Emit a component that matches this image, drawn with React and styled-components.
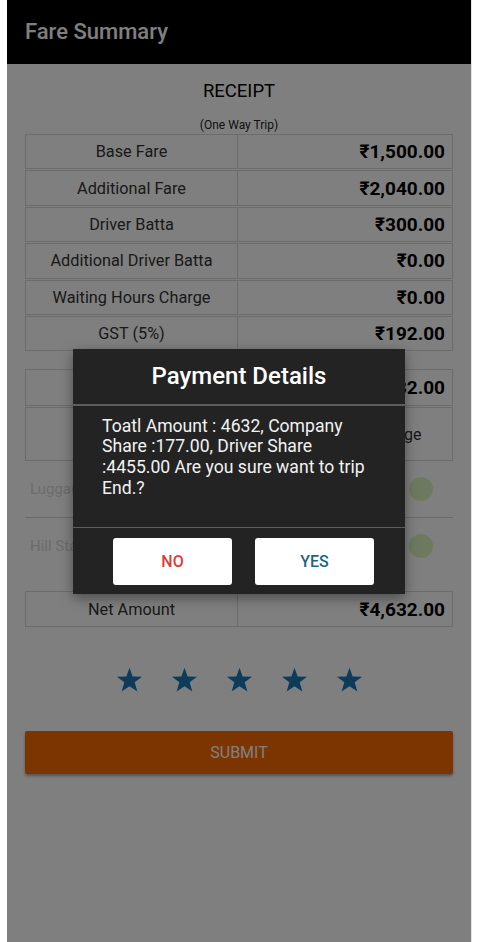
import React from "react";
import styled, { createGlobalStyle } from "styled-components";

const GlobalStyle = createGlobalStyle`
  body {
    margin: 0;
    background: #fff;
    font-family: Roboto, "Noto Sans", "Liberation Sans", sans-serif;
  }
`;

const Frame = styled.div`
  position: relative;
  margin-left: 7px;
  width: 464px;
  height: 942px;
  overflow: hidden;
  background: #fff;
  box-shadow: 1px 0 0 #e4e4e4;
`;

const Header = styled.header`
  height: 64px;
  background: #000;
  color: #fff;
  display: flex;
  align-items: center;
  padding-left: 18px;
  padding-bottom: 2px;
  box-sizing: border-box;
  font-size: 22px;
  font-weight: 500;
`;

const Content = styled.main`
  padding: 0 18px;
`;

const Title = styled.h2`
  margin: 0;
  padding-top: 16px;
  text-align: center;
  font-size: 18.5px;
  line-height: 22px;
  font-weight: 400;
  color: #000;
`;

const SubTitle = styled.div`
  margin-top: 16px;
  text-align: center;
  font-size: 12px;
  line-height: 14px;
  color: #222;
`;

const Table = styled.div`
  display: flex;
  flex-direction: column;
  gap: 1px;
  margin-top: ${(p) => p.$top || 0}px;
`;

const Row = styled.div`
  display: grid;
  grid-template-columns: 212px 1fr;
  height: ${(p) => p.$h || 35.4}px;
  border: 1px solid #d9d9d9;
  box-sizing: border-box;
`;

const Label = styled.div`
  display: flex;
  align-items: center;
  justify-content: center;
  text-align: center;
  border-right: 1px solid #d9d9d9;
  font-size: 16.3px;
  line-height: 19px;
  color: #333;
`;

const Value = styled.div`
  display: flex;
  align-items: center;
  justify-content: ${(p) => (p.$plain ? "center" : "flex-end")};
  padding: ${(p) => (p.$plain ? "0 0 0 30px" : "0 7px 0 0")};
  font-size: ${(p) => (p.$plain ? 16 : 19)}px;
  font-weight: ${(p) => (p.$plain ? 400 : 700)};
  color: ${(p) => (p.$plain ? "#333" : "#000")};
`;

const SwitchRow = styled.div`
  display: flex;
  align-items: center;
  justify-content: space-between;
  height: 56px;
  padding: 0 20px 0 5px;
  border-bottom: ${(p) => (p.$divided ? "1px solid #d6d6d6" : "none")};
  font-size: 15px;
  color: #d8d8d8;
`;

const Thumb = styled.span`
  width: 24px;
  height: 24px;
  border-radius: 50%;
  background: #dcf5c0;
`;

const Stars = styled.div`
  display: flex;
  justify-content: center;
  gap: 28px;
  margin-top: 40px;
  padding-left: 1px;
`;

const Submit = styled.button`
  display: block;
  width: 100%;
  height: 43px;
  margin-top: 38px;
  border: none;
  border-radius: 2px;
  background: #fb6a00;
  color: #fff;
  font-family: inherit;
  font-size: 16px;
  box-shadow: 0 2px 3px rgba(0, 0, 0, 0.35);
`;

const Overlay = styled.div`
  position: absolute;
  inset: 0;
  background: rgba(0, 0, 0, 0.5);
  display: flex;
  align-items: center;
  justify-content: center;
`;

const Dialog = styled.div`
  width: 332px;
  background: #232323;
  box-shadow: 0 4px 12px rgba(0, 0, 0, 0.4);
  margin-top: 1px;
`;

const DialogTitle = styled.div`
  height: 55px;
  display: flex;
  align-items: center;
  justify-content: center;
  border-bottom: 2px solid #5c5c5c;
  color: #fff;
  font-size: 24px;
  font-weight: 500;
`;

const Message = styled.p`
  margin: 0;
  padding: 10px 30px 29px 29px;
  color: #f2f2f2;
  font-size: 17.6px;
  line-height: 20.7px;
`;

const Actions = styled.div`
  display: flex;
  justify-content: center;
  gap: 23px;
  padding: 10px 0 9px 9px;
  border-top: 1px solid #5c5c5c;
`;

const DialogButton = styled.button`
  width: 119px;
  height: 47px;
  border: none;
  border-radius: 3px;
  background: #fff;
  color: ${(p) => p.$color};
  font-family: inherit;
  font-size: 16px;
  font-weight: 500;
`;

const Star = () => (
  <svg width="27" height="26" viewBox="0 0 24 23">
    <polygon
      fill="#1a78b4"
      points="12,0.5 14.8,8.3 23.2,8.5 16.6,13.6 19,21.8 12,17 5,21.8 7.4,13.6 0.8,8.5 9.2,8.3"
    />
  </svg>
);

const fares = [
  ["Base Fare", "₹1,500.00"],
  ["Additional Fare", "₹2,040.00"],
  ["Driver Batta", "₹300.00"],
  ["Additional Driver Batta", "₹0.00"],
  ["Waiting Hours Charge", "₹0.00"],
  ["GST (5%)", "₹192.00"],
];

export default function App() {
  return (
    <>
      <GlobalStyle />
      <Frame>
        <Header>Fare Summary</Header>
        <Content>
          <Title>RECEIPT</Title>
          <SubTitle>(One Way Trip)</SubTitle>
          <Table $top={2}>
            {fares.map(([label, value]) => (
              <Row key={label}>
                <Label>{label}</Label>
                <Value>{value}</Value>
              </Row>
            ))}
          </Table>

          <Table $top={18}>
            <Row $h={37}>
              <Label>Total Amount</Label>
              <Value>₹4,632.00</Value>
            </Row>
            <Row $h={54}>
              <Label>
                Toll / Parking
                <br />
                Charges
              </Label>
              <Value $plain>Add Extra Charge</Value>
            </Row>
          </Table>

          <SwitchRow $divided>
            <span>Luggage Charge</span>
            <Thumb />
          </SwitchRow>
          <SwitchRow>
            <span>Hill Station Charge</span>
            <Thumb />
          </SwitchRow>

          <Table $top={17}>
            <Row $h={36}>
              <Label>Net Amount</Label>
              <Value>₹4,632.00</Value>
            </Row>
          </Table>

          <Stars>
            {[0, 1, 2, 3, 4].map((i) => (
              <Star key={i} />
            ))}
          </Stars>

          <Submit>SUBMIT</Submit>
        </Content>

        <Overlay>
          <Dialog>
            <DialogTitle>Payment Details</DialogTitle>
            <Message>
              Toatl Amount : 4632, Company Share :177.00, Driver Share :4455.00
              Are you sure want to trip End.?
            </Message>
            <Actions>
              <DialogButton $color="#e03a3a">NO</DialogButton>
              <DialogButton $color="#1c6584">YES</DialogButton>
            </Actions>
          </Dialog>
        </Overlay>
      </Frame>
    </>
  );
}
